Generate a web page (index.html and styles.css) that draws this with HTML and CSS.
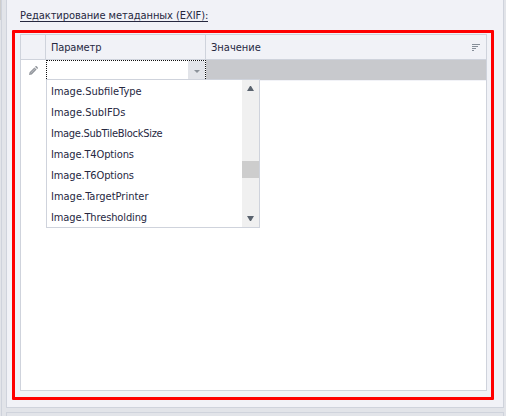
FILE: index.html
```html
<!DOCTYPE html>
<html lang="ru">
<head>
<meta charset="utf-8">
<title>EXIF</title>
<link rel="stylesheet" href="styles.css">
</head>
<body>
<div class="window">
  <div class="edge"><div class="edge-thumb"></div></div>
  <div class="panels">
    <section class="panel">
      <h1 class="title"><span>Редактирование метаданных (EXIF):</span></h1>
      <div class="highlight">
        <div class="grid">
          <div class="row head">
            <div class="cell mark"></div>
            <div class="cell param"><span class="t-param">Параметр</span></div>
            <div class="cell value"><span class="t-value">Значение</span>
              <svg class="sort" width="8" height="7" shape-rendering="crispEdges"><path d="M0 0h8v1H0zM0 2h6v1H0zM0 4h4v1H0zM0 6h2v1H0z" fill="#868e98"/></svg>
            </div>
          </div>
          <div class="row edit">
            <div class="mark"><svg width="9" height="9" viewBox="0 0 9 9"><path d="M0 9L.6 6.2 5.4 1.4 7.6 3.6 2.8 8.4zM6 .8L6.8 0Q7.4-.2 8.2.8T9 2.2L8.2 3z" fill="#92969c"/><path d="M1.6 7.2L6 2.8" stroke="#d5d7da" stroke-width=".6"/></svg></div>
            <div class="combo">
              <div class="combo-input"></div>
              <div class="combo-button"><svg width="6" height="3"><path d="M0 0h6L3 3z" fill="#8b929a"/></svg></div>
              <div class="dropdown">
                <ul class="list">
                  <li>Image.SubfileType</li>
                  <li>Image.SubIFDs</li>
                  <li class="tight">Image.SubTileBlockSize</li>
                  <li class="snug">Image.T4Options</li>
                  <li class="snug">Image.T6Options</li>
                  <li>Image.TargetPrinter</li>
                  <li class="snug">Image.Thresholding</li>
                </ul>
                <div class="scrollbar">
                  <svg width="7" height="5"><path d="M0 5L3 0h1l3 5z" fill="#5a636e"/></svg>
                  <div class="thumb"></div>
                  <svg width="7" height="5"><path d="M0 0h7L4 5H3z" fill="#5a636e"/></svg>
                </div>
              </div>
            </div>
            <div class="blank"></div>
          </div>
        </div>
      </div>
    </section>
    <section class="panel next"></section>
  </div>
</div>
</body>
</html>
```
FILE: styles.css
```css
* { box-sizing: border-box; }
body {
  margin: 0;
  overflow: hidden;
  background: #e2e4e9;
  color: #26283f;
  font: 11px/14px "DejaVu Sans Condensed", "DejaVu Sans", sans-serif;
  font-stretch: condensed;
}
.window { display: flex; width: 506px; height: 416px; overflow: hidden; }
.edge { width: 2px; border-right: 1px solid #cfd3dc; background: #e2e4e9; }
.edge-thumb { height: 20px; background: #cdcdcd; }
.panels { margin-left: 4px; width: 498px; }
.panel {
  height: 408px;
  padding: 9px 9px 7px 5px;
  border: 1px solid #cfd3dc;
  border-top: 0;
  background: #f1f2f7;
}
.next { height: 8px; margin-top: 4px; padding: 0; border-top: 1px solid #cfd3dc; background: #e2e4e9; }
.title { height: 21px; margin: 0; padding-left: 8px; font-size: 11px; font-weight: normal; line-height: 14px; letter-spacing: -.06px; white-space: nowrap; }
.title span { display: inline-block; height: 13px; border-bottom: 1px solid #26283f; }
.highlight { width: 482px; height: 370px; padding: 1px 4px 6px 5px; border: 3px solid #f00; border-radius: 1px; }
.grid { width: 467px; height: 357px; border: 1px solid #cfd3dc; background: #fff; }
.row { display: grid; grid-template-columns: 25px 160px 1fr; }
.head { height: 25px; border-bottom: 1px solid #cfd3dc; background: #f1f2f7; }
.cell { display: flex; align-items: center; border-right: 1px solid #cfd3dc; padding-left: 5px; }
.cell span { padding-top: 2px; }
.t-param { letter-spacing: -.15px; }
.cell.value { border-right: 0; justify-content: space-between; padding-right: 6px; }
.edit { height: 21px; }
.edit .mark { display: flex; align-items: center; justify-content: center; padding-bottom: 1px; }
.combo { position: relative; display: flex; border: 1px dotted #111; border-bottom: 0; }
.combo-input { flex: 1; }
.combo-button { display: flex; align-items: center; justify-content: center; width: 17px; background: #e2e4e9; }
.blank { background: #c8c9cd; border-bottom: 1px solid #f1f2f7; }
.dropdown {
  position: absolute;
  top: 18px;
  left: -1px;
  display: flex;
  width: 214px;
  height: 149px;
  border: 1px solid #cfd3dc;
  background: #fff;
}
.list { flex: 1; margin: 0; padding: 0 0 0 4px; list-style: none; }
.list li { height: 21px; line-height: 23px; white-space: nowrap; }
.list .snug { letter-spacing: -.12px; }
.list .tight { letter-spacing: -.27px; }
.scrollbar { display: flex; flex-direction: column; align-items: center; width: 17px; padding: 6px 0; background: #f0f0f0; }
.thumb { width: 17px; height: 17px; margin: 70px 0 auto; background: #cdcdcd; }
```
